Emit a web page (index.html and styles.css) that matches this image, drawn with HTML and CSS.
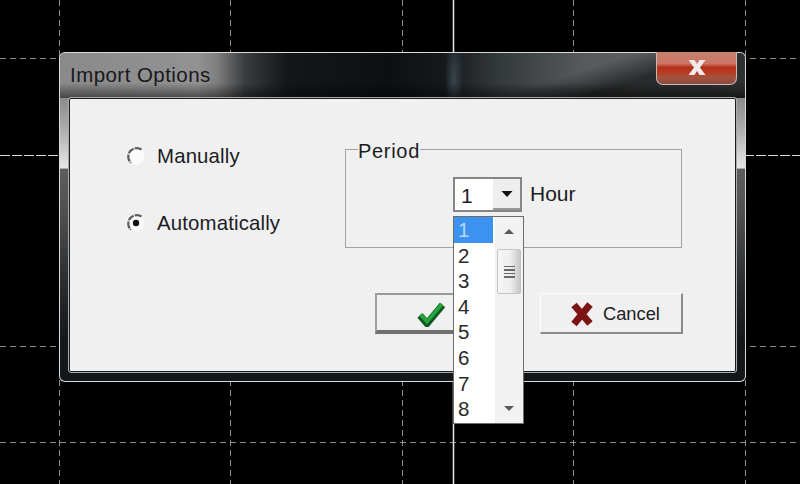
FILE: index.html
```html
<!DOCTYPE html>
<html lang="en">
<head>
<meta charset="utf-8">
<title>Import Options</title>
<link rel="stylesheet" href="styles.css">
</head>
<body>
<svg class="grid" width="800" height="484" viewBox="0 0 800 484" aria-hidden="true">
  <g class="dash">
    <path d="M59.5 0V484M230.5 0V484M402.5 0V484M573.5 0V484M745.5 0V484"/>
    <path d="M0 58.5H800M0 346.5H800M0 442.5H800"/>
  </g>
  <path class="solid" d="M453.5 0V484"/>
  <path class="long" d="M0 155.5H800"/>
</svg>

<section class="window">
  <header class="titlebar">
    <h1 class="title">Import Options</h1>
    <button class="close" type="button" aria-label="Close">
      <svg width="20" height="17" viewBox="0 0 20 17"><path class="close-x" d="M1.500 1h6L10 5l2.500-4h6L13 8.500 18.500 16h-6L10 12l-2.500 4h-6L7 8.500z"/></svg>
    </button>
  </header>

  <main class="client">
    <div class="top-row">
      <div class="radios">
        <label class="radio">
          <svg class="radio-mark" width="20" height="20" viewBox="0 0 20 20"><circle class="radio-face" cx="10" cy="10" r="8.500"/><path class="radio-arc" d="M15.500 3.500A8.500 8.500 0 0 0 5 16.800"/></svg>
          <span>Manually</span>
        </label>
        <label class="radio">
          <svg class="radio-mark" width="20" height="20" viewBox="0 0 20 20"><circle class="radio-face" cx="10" cy="10" r="8.500"/><path class="radio-arc" d="M15.500 3.500A8.500 8.500 0 0 0 5 16.800"/><circle class="radio-dot" cx="10" cy="10" r="3.200"/></svg>
          <span>Automatically</span>
        </label>
      </div>

      <div class="group">
        <span class="legend">Period</span>
        <div class="period-row">
          <div class="combo-wrap">
            <div class="combo">
              <span class="combo-value">1</span>
              <span class="combo-btn"><svg width="14" height="8" viewBox="0 0 14 8"><path class="glyph" d="M1.500 1H12.500L7 7z"/></svg></span>
            </div>
            <div class="dropdown">
              <ul class="options">
                <li class="option selected">1</li>
                <li class="option">2</li>
                <li class="option">3</li>
                <li class="option">4</li>
                <li class="option">5</li>
                <li class="option">6</li>
                <li class="option">7</li>
                <li class="option">8</li>
              </ul>
              <div class="scrollbar">
                <svg class="arrow-up" width="12" height="7" viewBox="0 0 12 7"><path class="scroll-glyph" d="M6 1L11 6H1z"/></svg>
                <div class="thumb">
                  <span class="grip"></span><span class="grip"></span><span class="grip"></span><span class="grip"></span>
                </div>
                <svg class="arrow-down" width="12" height="7" viewBox="0 0 12 7"><path class="scroll-glyph" d="M1 1H11L6 6z"/></svg>
              </div>
            </div>
          </div>
          <span class="unit">Hour</span>
        </div>
      </div>
    </div>

    <div class="buttons">
      <button class="btn btn-ok" type="button" aria-label="OK">
        <svg width="30" height="26" viewBox="0 0 30 26"><path class="check-shade" d="M4 14.500L11 22.500L26.500 4"/><path class="check" d="M4.500 13.500L11 20.500L26 3"/></svg>
      </button>
      <button class="btn btn-cancel" type="button">
        <svg width="24" height="26" viewBox="0 0 24 26"><path class="cross" d="M4 4L20 22.500M20 3.500L4 23"/></svg>
        <span>Cancel</span>
      </button>
    </div>
  </main>
</section>
</body>
</html>
```

FILE: styles.css
```css
* { box-sizing: border-box; }

html, body {
  margin: 0;
  height: 100%;
}

body {
  position: relative;
  width: 800px;
  height: 484px;
  overflow: hidden;
  background: #000;
  font-family: "Liberation Sans", Arial, sans-serif;
  color: #1c1c24;
}

.grid {
  position: absolute;
  left: 0;
  top: 0;
  display: block;
}

.dash path {
  fill: none;
  stroke: #8f8f8f;
  stroke-width: 1;
  stroke-dasharray: 6 4;
}

.solid {
  fill: none;
  stroke: #e8e8e8;
  stroke-width: 1.500;
}

.long {
  fill: none;
  stroke: #d8d8d8;
  stroke-width: 1;
  stroke-dasharray: 10 2;
}

/* Window */
.window {
  position: absolute;
  left: 59px;
  top: 52px;
  width: 687px;
  height: 330px;
  display: flex;
  flex-direction: column;
  padding: 1px;
  border-radius: 6px;
  background: #d8dadc;
}

.window::before {
  content: "";
  position: absolute;
  inset: 1px;
  border-radius: 5px;
  background: linear-gradient(to bottom,
    #8a8a8a 0, #8c8c8c 14%, #b0b0b0 24%, #e2e2e2 34%, #e4e4e4 35%,
    #5e5e5e 35.500%, #4e4e4e 50%, #2a2c2e 70%, #14171a 88%, #14171a 100%);
}

.titlebar {
  position: relative;
  flex: none;
  display: flex;
  align-items: flex-start;
  justify-content: space-between;
  height: 45px;
  padding: 0 8px 0 10px;
  border-radius: 5px 5px 0 0;
  background:
    linear-gradient(to bottom, rgba(0, 0, 0, 0) 66%, rgba(0, 0, 0, .5) 100%),
    radial-gradient(ellipse 9px 45px at 394px 26px, rgba(64, 78, 86, .8), rgba(40, 50, 56, 0)),
    linear-gradient(162deg, rgba(0, 0, 0, 0) 70%, rgba(0, 0, 0, .55) 80%),
    linear-gradient(90deg, #8a8a8a 0, #929292 20%, #7e7e7e 23%, #3a3c3e 27%, #14171a 33%, #0d0f11 48%, #16191c 56%, #33383b 64%, #55595c 76%, #666a6c 100%);
}

.title {
  margin: 9px 0 0;
  font-size: 20.500px;
  font-weight: 400;
  line-height: 26px;
  letter-spacing: .45px;
  color: #18181c;
}

.close {
  flex: none;
  width: 81px;
  height: 33px;
  margin: -1px 0 0;
  padding: 0 0 2px;
  display: flex;
  align-items: center;
  justify-content: center;
  border: 1px solid #c9b8b4;
  border-top: 0;
  border-radius: 0 0 7px 7px;
  background: linear-gradient(to bottom, #c8806f 0, #cc7563 36%, #b5301a 48%, #b93a22 62%, #a4533f 80%, #8b4a40 100%);
}

.close-x { fill: #f2e9ea; }

/* Client area */
.client {
  position: relative;
  flex: none;
  display: flex;
  flex-direction: column;
  width: 667px;
  height: 274px;
  margin-left: 9px;
  border: 1px solid #1a1d20;
  border-radius: 2px;
  outline: 1px solid #a8acb0;
  background: #f0f0f0;
}

.top-row {
  display: flex;
  padding: 45px 0 0 56px;
}

.radios {
  flex: none;
  width: 219px;
  display: flex;
  flex-direction: column;
  gap: 43px;
}

.radio {
  display: flex;
  align-items: center;
  gap: 11px;
  height: 24px;
  font-size: 20.400px;
  letter-spacing: .15px;
}

.radio-face { fill: #fbfbfb; }

.radio-arc {
  fill: none;
  stroke: #5e5e5e;
  stroke-width: 2.200;
  stroke-dasharray: 7 1;
}

.radio-dot { fill: #111; }

.group {
  position: relative;
  flex: none;
  width: 337px;
  height: 99px;
  margin-top: 5px;
  border: 1px solid #a2a2a2;
}

.legend {
  position: absolute;
  left: 12px;
  top: -10px;
  background: #f0f0f0;
  font-size: 20px;
  line-height: 22px;
  letter-spacing: .7px;
}

.period-row {
  display: flex;
  align-items: center;
  gap: 8px;
  padding: 27px 0 0 107px;
}

.combo-wrap { position: relative; }

.combo {
  display: flex;
  width: 69px;
  height: 35px;
  border: 2px solid #858585;
  background: #fff;
}

.combo-value {
  flex: 1;
  padding-left: 6px;
  font-size: 21px;
  line-height: 34px;
}

.combo-btn {
  flex: none;
  display: flex;
  align-items: center;
  justify-content: center;
  width: 27px;
  background: #eeeeee;
  border-bottom: 2px solid #999;
}

.glyph { fill: #111; }

.unit {
  font-size: 21px;
  line-height: 24px;
  margin-bottom: 1px;
}

/* Dropdown */
.dropdown {
  position: absolute;
  left: 0;
  top: 39px;
  z-index: 2;
  display: flex;
  width: 71px;
  height: 208px;
  border: 1px solid #6c6c6c;
  background: #fff;
}

.options {
  flex: 1;
  margin: 0;
  padding: 0;
  list-style: none;
}

.option {
  height: 25.600px;
  padding-left: 4px;
  font-size: 20.500px;
  line-height: 26px;
  color: #2a2a2a;
}

.selected {
  width: 39px;
  background: #3c92ee;
  color: #b7d8fa;
}

.scrollbar {
  flex: none;
  width: 28px;
  display: flex;
  flex-direction: column;
  align-items: center;
  background: #f2f2f2;
}

.scroll-glyph { fill: #5a5a5a; }

.arrow-up { margin-top: 11px; }

.thumb {
  display: flex;
  flex-direction: column;
  align-items: center;
  justify-content: center;
  gap: 2px;
  width: 24px;
  height: 45px;
  margin-top: 14px;
  border: 1px solid #c4c4c4;
  border-radius: 2px;
  background: linear-gradient(90deg, #f6f6f6 0, #eee 55%, #c8c8c8 100%);
}

.grip {
  width: 11px;
  height: 1.500px;
  background: #6a6a6a;
}

.arrow-down { margin-top: auto; margin-bottom: 11px; }

/* Buttons */
.buttons {
  display: flex;
  gap: 22px;
  margin-top: 45px;
  padding-left: 305px;
}

.btn {
  display: flex;
  align-items: center;
  width: 143px;
  height: 41px;
  margin: 0;
  font: inherit;
  color: inherit;
  background: #f0f0f0;
}

.btn-ok {
  padding: 2px 0 0 39px;
  border-style: solid;
  border-width: 2px 2px 4px 2px;
  border-color: #9a9a9a #9a9a9a #707070 #a0a0a0;
}

.btn-cancel {
  gap: 9px;
  padding: 2px 0 0 29px;
  border-style: solid;
  border-width: 1px 2px 2px 1px;
  border-color: #fbfbfb #8a8a8a #8a8a8a #fbfbfb;
  font-size: 18.300px;
}

.check, .check-shade {
  fill: none;
  stroke-linejoin: miter;
}

.check-shade {
  stroke: #0d5a20;
  stroke-width: 7;
}

.check {
  stroke: #27a53c;
  stroke-width: 3.500;
}

.cross {
  fill: none;
  stroke: #7d1414;
  stroke-width: 7;
}
```
